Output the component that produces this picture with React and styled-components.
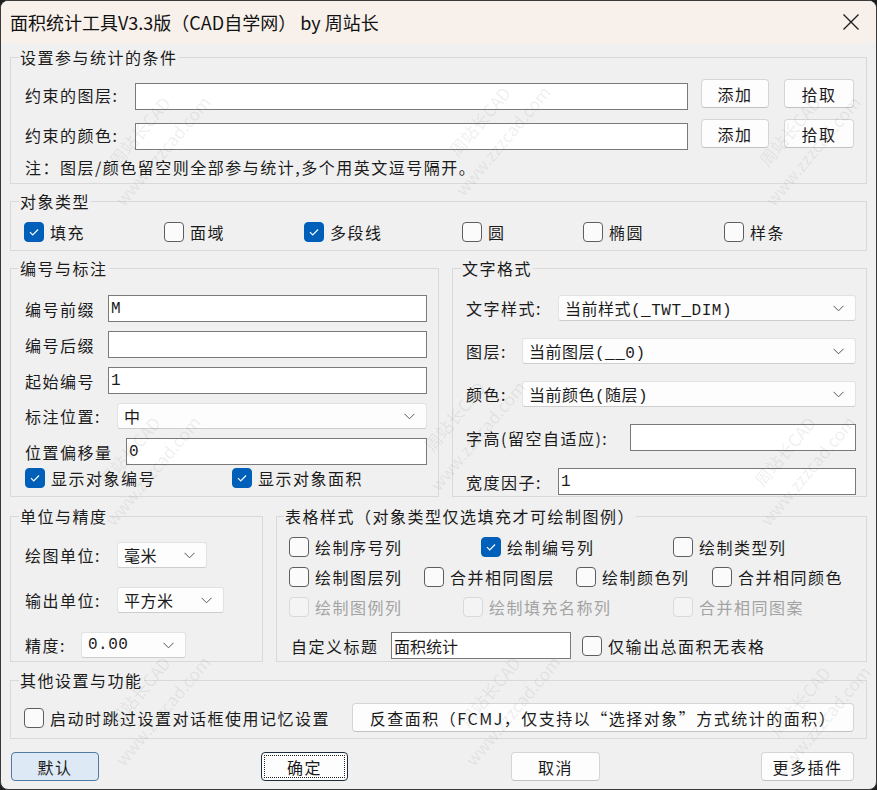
import React from "react";
import styled, { createGlobalStyle } from "styled-components";

const GlobalStyle = createGlobalStyle`
  html, body {
    margin: 0;
    padding: 0;
    background: #1e1e1e;
  }
  body {
    font-family: "Noto Sans CJK SC", "Noto Sans", sans-serif;
    color: #1b1b1b;
  }
`;

const Window = styled.div`
  position: relative;
  width: 877px;
  height: 790px;
  box-sizing: border-box;
  border: 1px solid #3a3a3a;
  border-radius: 8px;
  background: #f0f0f0;
  overflow: hidden;
  display: flex;
  flex-direction: column;
`;

const TitleBar = styled.div`
  flex: none;
  height: 42px;
  display: flex;
  align-items: center;
  padding: 0 17px 0 9px;
  background: #f8f0ea;
  font-size: 18px;
  color: #111;
`;

const Title = styled.div`
  flex: 1;
  line-height: 24px;
  white-space: nowrap;
`;

const Body = styled.div`
  display: flex;
  flex-direction: column;
  padding: 3px 9px 0;
`;

const Group = styled.fieldset`
  margin: ${(p) => p.$mt || 0}px 0 0;
  padding: 0;
  border: 1px solid #d9d9d9;
  min-width: 0;
  box-sizing: border-box;
  width: ${(p) => (p.$w ? `${p.$w}px` : "auto")};
  flex: ${(p) => (p.$grow ? "1 1 0" : "none")};
`;

const Legend = styled.legend`
  margin-left: ${(p) => p.$ml ?? 8}px;
  padding: 0 1px;
  font-size: 16px;
  line-height: 22px;
  letter-spacing: 1.5px;
  white-space: nowrap;
`;

const Stack = styled.div`
  display: flex;
  flex-direction: column;
  gap: ${(p) => p.$gap || 0}px;
  padding: ${(p) => p.$pad};
`;

const Columns = styled.div`
  display: flex;
  gap: 13px;
  margin-top: ${(p) => p.$mt}px;
`;

const Row = styled.div`
  display: flex;
  align-items: ${(p) => p.$align || "center"};
  height: ${(p) => (p.$h ? `${p.$h}px` : "auto")};
  margin-top: ${(p) => p.$mt || 0}px;
`;

const Cell = styled.div`
  flex: none;
  width: ${(p) => (p.$w ? `${p.$w}px` : "auto")};
  margin-left: ${(p) => p.$ml || 0}px;
  display: flex;
  align-items: center;
`;

const Label = styled.span`
  flex: none;
  width: ${(p) => (p.$w ? `${p.$w}px` : "auto")};
  margin-top: ${(p) => p.$mt || 0}px;
  margin-left: ${(p) => p.$ml || 0}px;
  font-size: 16px;
  line-height: 22px;
  letter-spacing: 1.5px;
  white-space: nowrap;
  color: ${(p) => (p.$muted ? "#a3a3a3" : "#1b1b1b")};
`;

const Field = styled.input`
  box-sizing: border-box;
  height: 27px;
  margin: ${(p) => p.$mt || 0}px 0 0;
  width: ${(p) => (p.$w ? `${p.$w}px` : "auto")};
  flex: ${(p) => (p.$w ? "none" : 1)};
  min-width: 0;
  padding: 0 2px;
  background: #fff;
  border: 1px solid #7a7a7a;
  border-radius: 0;
  outline: none;
  font-family: "Liberation Mono", "Noto Sans CJK SC", monospace;
  font-size: 16px;
  color: #1b1b1b;
`;

const ComboBox = styled.div`
  box-sizing: border-box;
  height: 26px;
  width: ${(p) => (p.$w ? `${p.$w}px` : "auto")};
  flex: ${(p) => (p.$w ? "none" : 1)};
  display: flex;
  align-items: center;
  padding: 0 11px 0 6px;
  background: #fdfdfd;
  border: 1px solid #e2e2e2;
  border-bottom-color: #cdcdcd;
  border-radius: 3px;
  font-family: "Liberation Mono", "Noto Sans CJK SC", monospace;
  font-size: 16px;
  letter-spacing: 0.5px;
  white-space: nowrap;
  span {
    flex: 1;
  }
  svg {
    flex: none;
  }
`;

const Button = styled.button`
  box-sizing: border-box;
  height: 29px;
  width: ${(p) => p.$w}px;
  margin-left: ${(p) => (p.$ml === "auto" ? "auto" : `${p.$ml || 0}px`)};
  padding: 0;
  background: ${(p) => (p.$primary ? "#dde9f5" : "#fdfdfd")};
  border: 1px solid ${(p) => (p.$primary ? "#4f7aa3" : p.$focus ? "#1e2d3d" : "#d5d5d5")};
  border-bottom-color: ${(p) => (p.$primary ? "#4f7aa3" : p.$focus ? "#1e2d3d" : "#c2c2c2")};
  border-radius: 4px;
  outline: ${(p) => (p.$focus ? "1px dotted #222" : "none")};
  outline-offset: -4px;
  font-family: "Noto Sans CJK SC", sans-serif;
  font-size: 16px;
  letter-spacing: 1.5px;
  color: #1b1b1b;
  white-space: nowrap;
`;

const Footer = styled.div`
  display: grid;
  grid-template-columns: repeat(4, 250px);
  margin-top: 13px;
  padding-left: 1px;
`;

const CheckLabel = styled.label`
  display: inline-flex;
  align-items: center;
  gap: 6px;
  height: 22px;
`;

const Box = styled.span`
  box-sizing: border-box;
  width: 20px;
  height: 20px;
  flex: none;
  display: flex;
  align-items: center;
  justify-content: center;
  border-radius: 4px;
  border: 1px solid
    ${(p) => (p.$checked ? "#005fb8" : p.$disabled ? "#d9d9d9" : "#5e5e5e")};
  background: ${(p) => (p.$checked ? "#005fb8" : p.$disabled ? "#f4f4f4" : "#fbfbfb")};
`;

const Watermark = styled.div`
  position: absolute;
  inset: 0;
  pointer-events: none;
  overflow: hidden;
`;

const Mark = styled.div`
  position: absolute;
  left: ${(p) => p.$x}px;
  top: ${(p) => p.$y}px;
  transform: translate(-50%, -50%) rotate(-50deg);
  font-family: "Noto Sans CJK SC", sans-serif;
  font-size: 17px;
  line-height: 30px;
  text-align: center;
  color: rgba(90, 90, 90, 0.1);
  white-space: nowrap;
`;

const Chevron = () => (
  <svg width="11" height="7" viewBox="0 0 11 7">
    <polyline points="0.5,0.8 5.5,5.8 10.5,0.8" fill="none" stroke="#555" strokeWidth="1" />
  </svg>
);

const CloseIcon = () => (
  <svg width="16" height="16" viewBox="0 0 16 16">
    <path d="M0.5 0.5 L15.5 15.5 M15.5 0.5 L0.5 15.5" stroke="#1a1a1a" strokeWidth="1.3" />
  </svg>
);

const Check = ({ checked, disabled, children }) => (
  <CheckLabel>
    <Box $checked={checked} $disabled={disabled}>
      {checked && (
        <svg width="20" height="20" viewBox="0 0 20 20">
          <path d="M5.5 10.2 L8.6 13.2 L14.5 7.2" fill="none" stroke="#fff" strokeWidth="1.3" />
        </svg>
      )}
    </Box>
    <Label $muted={disabled}>{children}</Label>
  </CheckLabel>
);

const Combo = ({ w, children }) => (
  <ComboBox $w={w}>
    <span>{children}</span>
    <Chevron />
  </ComboBox>
);

const types = [
  { label: "填充", checked: true, w: 140 },
  { label: "面域", w: 140 },
  { label: "多段线", checked: true, w: 158 },
  { label: "圆", w: 121 },
  { label: "椭圆", w: 141 },
  { label: "样条" },
];

const marks = [
  [150, 140], [490, 130], [800, 140],
  [140, 460], [465, 425], [795, 460],
  [150, 700], [500, 700], [810, 710],
];

const App = () => {
  return (
    <>
      <GlobalStyle />
      <Window>
        <TitleBar>
          <Title>面积统计工具V3.3版（CAD自学网） by 周站长</Title>
          <CloseIcon />
        </TitleBar>
        <Body>
          <Group>
            <Legend>设置参与统计的条件</Legend>
            <Stack $pad="11px 12px 5px 14px" $gap={9}>
              <Row $align="flex-start">
                <Label $w={110} $mt={5}>约束的图层:</Label>
                <Field $mt={4} readOnly value="" />
                <Button $w={68} $ml={13}>添加</Button>
                <Button $w={70} $ml={15}>拾取</Button>
              </Row>
              <Row $align="flex-start">
                <Label $w={110} $mt={5}>约束的颜色:</Label>
                <Field $mt={4} readOnly value="" />
                <Button $w={68} $ml={13}>添加</Button>
                <Button $w={70} $ml={15}>拾取</Button>
              </Row>
              <Label $mt={-3}>注：图层/颜色留空则全部参与统计,多个用英文逗号隔开。</Label>
            </Stack>
          </Group>

          <Group $mt={6}>
            <Legend>对象类型</Legend>
            <Stack $pad="9px 12px 7px 13px">
              <Row $h={22}>
                {types.map((t) => (
                  <Cell key={t.label} $w={t.w}>
                    <Check checked={t.checked}>{t.label}</Check>
                  </Cell>
                ))}
              </Row>
            </Stack>
          </Group>

          <Columns $mt={6}>
            <Group $w={429}>
              <Legend>编号与标注</Legend>
              <Stack $pad="16px 11px 7px 14px" $gap={9}>
                <Row>
                  <Label $w={83}>编号前缀</Label>
                  <Field readOnly value="M" />
                </Row>
                <Row>
                  <Label $w={83}>编号后缀</Label>
                  <Field readOnly value="" />
                </Row>
                <Row>
                  <Label $w={83}>起始编号</Label>
                  <Field readOnly value="1" />
                </Row>
                <Row>
                  <Label $w={92}>标注位置:</Label>
                  <Combo>中</Combo>
                </Row>
                <Row>
                  <Label $w={101}>位置偏移量</Label>
                  <Field readOnly value="0" />
                </Row>
                <Row $h={22} $mt={-7}>
                  <Cell $w={207}>
                    <Check checked>显示对象编号</Check>
                  </Cell>
                  <Check checked>显示对象面积</Check>
                </Row>
              </Stack>
            </Group>

            <Group $grow>
              <Legend>文字格式</Legend>
              <Stack $pad="16px 10px 1px 13px" $gap={17}>
                <Row>
                  <Label $w={92}>文字样式:</Label>
                  <Combo>当前样式(_TWT_DIM)</Combo>
                </Row>
                <Row>
                  <Label $w={56}>图层:</Label>
                  <Combo>当前图层(__0)</Combo>
                </Row>
                <Row>
                  <Label $w={56}>颜色:</Label>
                  <Combo>当前颜色(随层)</Combo>
                </Row>
                <Row>
                  <Label $w={164}>字高(留空自适应):</Label>
                  <Field readOnly value="" />
                </Row>
                <Row>
                  <Label $w={92}>宽度因子:</Label>
                  <Field readOnly value="1" />
                </Row>
              </Stack>
            </Group>
          </Columns>

          <Columns $mt={8}>
            <Group $w={253}>
              <Legend>单位与精度</Legend>
              <Stack $pad="15px 10px 3px 14px" $gap={19}>
                <Row>
                  <Label $w={92}>绘图单位:</Label>
                  <Combo w={90}>毫米</Combo>
                </Row>
                <Row>
                  <Label $w={92}>输出单位:</Label>
                  <Combo w={107}>平方米</Combo>
                </Row>
                <Row>
                  <Label $w={56}>精度:</Label>
                  <Combo w={105}>0.00</Combo>
                </Row>
              </Stack>
            </Group>

            <Group $grow>
              <Legend $ml={7}>表格样式（对象类型仅选填充才可绘制图例）</Legend>
              <Stack $pad="9px 10px 2px 12px" $gap={8}>
                <Row $h={22}>
                  <Cell $w={192}><Check>绘制序号列</Check></Cell>
                  <Cell $w={192}><Check checked>绘制编号列</Check></Cell>
                  <Check>绘制类型列</Check>
                </Row>
                <Row $h={22}>
                  <Cell $w={135}><Check>绘制图层列</Check></Cell>
                  <Cell $w={152}><Check>合并相同图层</Check></Cell>
                  <Cell $w={136}><Check>绘制颜色列</Check></Cell>
                  <Check>合并相同颜色</Check>
                </Row>
                <Row $h={22}>
                  <Cell $w={174}><Check disabled>绘制图例列</Check></Cell>
                  <Cell $w={210}><Check disabled>绘制填充名称列</Check></Cell>
                  <Check disabled>合并相同图案</Check>
                </Row>
                <Row $mt={6}>
                  <Label $w={100} $ml={2}>自定义标题</Label>
                  <Field $w={180} readOnly value="面积统计" />
                  <Cell $ml={11}>
                    <Check>仅输出总面积无表格</Check>
                  </Cell>
                </Row>
              </Stack>
            </Group>
          </Columns>

          <Group $mt={7}>
            <Legend>其他设置与功能</Legend>
            <Stack $pad="12px 12px 6px 13px">
              <Row>
                <Check>启动时跳过设置对话框使用记忆设置</Check>
                <Button $w={502} $ml="auto">
                  反查面积（FCMJ，仅支持以“选择对象”方式统计的面积）
                </Button>
              </Row>
            </Stack>
          </Group>

          <Footer>
            <Button $w={88} $primary>默认</Button>
            <Button $w={87} $focus>确定</Button>
            <Button $w={89}>取消</Button>
            <Button $w={93}>更多插件</Button>
          </Footer>
        </Body>

        <Watermark>
          {marks.map(([x, y]) => (
            <Mark key={`${x}-${y}`} $x={x} $y={y}>
              周站长CAD
              <br />
              www.zzzcad.com
            </Mark>
          ))}
        </Watermark>
      </Window>
    </>
  );
};

export default App;
